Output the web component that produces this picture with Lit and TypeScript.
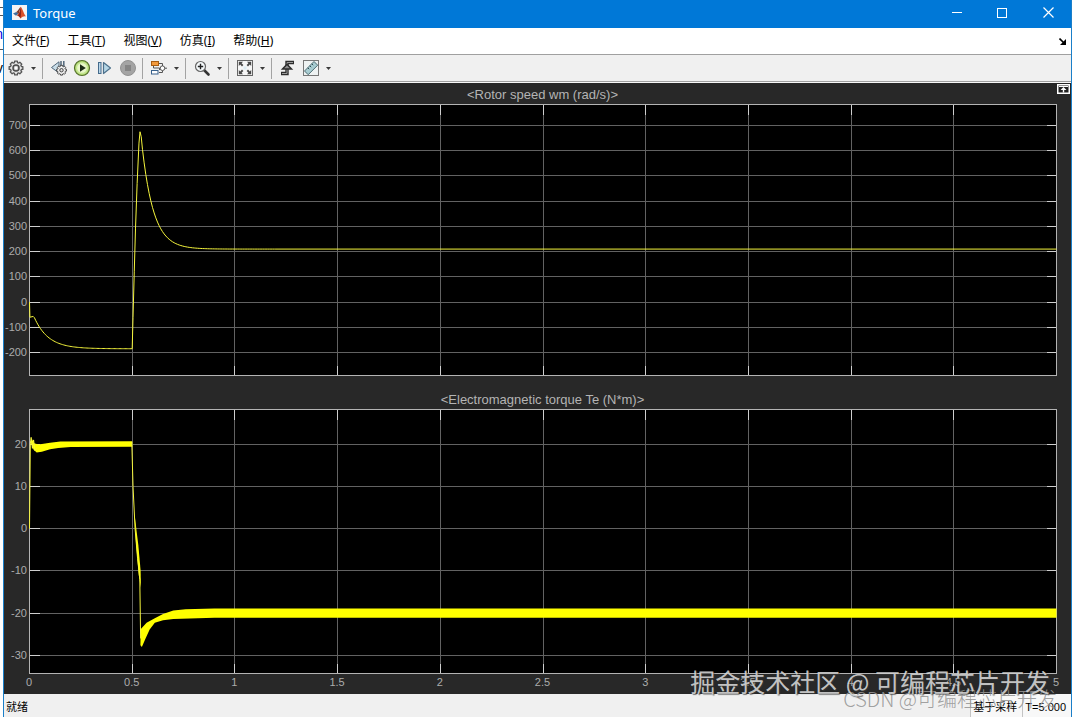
import { LitElement, html, css, svg } from "lit";
import { customElement, property } from "lit/decorators.js";

type Point = [number, number];

/* ---------- icons ---------- */

const icon = (body: unknown, w = 18, h = 18) =>
  html`<svg width=${w} height=${h} viewBox="0 0 ${w} ${h}" aria-hidden="true">${body}</svg>`;

const gearShape = (cx: number, cy: number, r: number) => {
  let d = "";
  const teeth = 8;
  for (let i = 0; i < teeth; i++) {
    const a = (i * 2 * Math.PI) / teeth;
    const at = (o: number, k: number) =>
      `${(cx + Math.cos(a + o) * k).toFixed(2)} ${(cy + Math.sin(a + o) * k).toFixed(2)}`;
    d += `${i ? "L" : "M"}${at(-0.27, r * 0.8)}L${at(-0.2, r)}L${at(0.2, r)}L${at(0.27, r * 0.8)}`;
  }
  return d + "Z";
};

const icons = {
  matlab: icon(
    svg`<rect width="15" height="15" fill="#f4f4f4" />
      <path d="M1 8.6 4.3 7 6.5 8.6 4 10.8Z" fill="#3f6f9f" />
      <path d="M4.3 7C6 6.500 7.200 3 8.700 1.800L6.800 9 4.500 10.800 6.500 8.600Z" fill="#7d3a2a" />
      <path d="M8.700 1.800C10.500 3.500 11.500 8.500 14 11.500 12.300 10.800 10.500 11.500 8.500 13.500 7.500 11.500 6.500 10.600 4.500 10.800 7.500 9 8 5 8.700 1.800Z" fill="#d8502a" />
      <path d="M8.700 1.800C9.200 5 9.300 9 8.500 13.500 7.800 12 7 11 6 10.700 8 8 8.300 5 8.700 1.800Z" fill="#8c2418" />`,
    15,
    15
  ),
  gear: icon(
    svg`<path d=${gearShape(9, 9, 7)} fill="#e6e6e6" stroke="#555" stroke-width="1.300" stroke-linejoin="round" />
      <circle cx="9" cy="9" r="3" fill="#d4d4d4" stroke="#4a4a4a" stroke-width="1.500" />
      <circle cx="9" cy="9" r="1.200" fill="#fff" />`
  ),
  stepBack: icon(
    svg`<path d="M1.500 8.500 9 2.800V14Z" fill="#c9dde8" stroke="#51677a" stroke-linejoin="round" />
      <path d="M11 2V8M13.800 2V8" stroke="#51677a" stroke-width="1.500" />
      <path d=${gearShape(11.5, 11.2, 5)} fill="#eee" stroke="#444" />
      <circle cx="11.500" cy="11.200" r="1.700" fill="#ddd" stroke="#444" />`
  ),
  run: icon(
    svg`<circle cx="9" cy="9" r="7.500" fill="#a9d468" stroke="#55702c" stroke-width="1.200" />
      <circle cx="9" cy="9" r="5.600" fill="#e9f7cb" stroke="#c6e692" stroke-width="1.500" />
      <path d="M7 5.300 12.800 9 7 12.700Z" fill="#1c2b16" />`
  ),
  step: icon(
    svg`<rect x="2.500" y="3.500" width="2.500" height="11" fill="#b9d7ea" stroke="#456b8c" />
      <path d="M7.500 3.500 14.500 9 7.500 14.500Z" fill="#b5d6e6" stroke="#4d718c" stroke-width="1.200" stroke-linejoin="round" />`
  ),
  stop: icon(
    svg`<circle cx="9" cy="9" r="7.500" fill="#a4a4a4" stroke="#929292" />
      <rect x="6" y="6" width="6" height="6" fill="#858585" />`
  ),
  blocks: icon(
    svg`<path d="M9 4.500H12.500V7M9 13.500H12.500V11.500M3.500 6V9H9.500V11" fill="none" stroke="#555" />
      <rect x="1.500" y="2.500" width="7" height="4" fill="#f39a3c" stroke="#a65b12" />
      <rect x="1.500" y="11.500" width="6.500" height="3.500" fill="#fff" stroke="#38618c" />
      <circle cx="12.500" cy="9.200" r="2.300" fill="#fff" stroke="#555" />
      <path d="M14.800 9.200H17" stroke="#555" />`
  ),
  zoomIn: icon(
    svg`<path d="M11 11 15.500 15.500" stroke="#333" stroke-width="2.600" stroke-linecap="round" />
      <circle cx="7.500" cy="7.500" r="5" fill="#f6fafc" stroke="#666" stroke-width="1.200" />
      <path d="M4.800 7.500H10.200M7.500 4.800V10.200" stroke="#222" stroke-width="1.400" />`
  ),
  fit: icon(
    svg`<rect x="1.500" y="1.500" width="15" height="15" fill="#f7f7f7" stroke="#666" />
      <path d="M2.800 2.800H7L5.600 4.200 7.400 6 6 7.400 4.200 5.600 2.800 7ZM15.200 2.800V7L13.800 5.600 12 7.400 10.600 6 12.400 4.200 11 2.800ZM2.800 15.200V11L4.200 12.400 6 10.600 7.400 12 5.600 13.800 7 15.200ZM15.200 15.200H11L12.400 13.800 10.600 12 12 10.600 13.800 12.400 15.200 11Z" fill="#484848" />
      <rect x="7.500" y="7.500" width="3" height="3" fill="#dcebf2" />`
  ),
  trigger: icon(
    svg`<path d="M2 14.500H8V3.500H15" fill="none" stroke="#2c2c2c" stroke-width="3.400" />
      <path d="M3 14.500H8V3.500H14" fill="none" stroke="#9a9a9a" />
      <path d="M3.500 10 8 5.300 12.500 10Z" fill="#8e8e8e" stroke="#2c2c2c" stroke-width="1.500" />`
  ),
  ruler: icon(
    svg`<rect x="1.500" y="1.500" width="15" height="15" fill="#eef2f2" stroke="#777" />
      <path d="M2.500 12 12 2.500 15.700 6.200 6.200 15.700Z" fill="#a8cdd2" stroke="#4c6b72" />
      <path d="M9.800 4.800 11.200 6.200M7.800 6.800 9.200 8.200M5.800 8.800 7.200 10.200" stroke="#2f4b52" />`
  ),
  caret: icon(svg`<path d="M0 0H5L2.500 3Z" fill="#3a3a3a" />`, 5, 3),
  minimize: icon(svg`<path d="M0 5.500H10" stroke="#fff" />`, 10, 11),
  maximize: icon(svg`<rect x=".5" y=".5" width="9" height="9" fill="none" stroke="#fff" />`, 10, 10),
  close: icon(svg`<path d="M.5 .5 10.500 10.500M10.500 .5 .5 10.500" stroke="#fff" stroke-width="1.200" />`, 11, 11),
  dock: icon(svg`<path d="M.5 .5 5 5" stroke="#000" stroke-width="1.600" /><path d="M7 1V7H1Z" fill="#000" />`, 7, 7),
  pin: icon(
    svg`<rect x=".75" y=".75" width="11.500" height="8.500" fill="#222" stroke="#fff" stroke-width="1.500" />
      <path d="M2 2.500H11" stroke="#fff" /><path d="M6.500 3 9.500 6H3.500ZM5.800 5H7.200V8.500H5.800Z" fill="#fff" />`,
    13,
    10
  ),
};

/* ---------- signals ---------- */

const decay = (t0: number, t1: number, from: number, to: number, tau: number): Point[] => {
  const out: Point[] = [];
  const n = 80;
  for (let i = 0; i <= n; i++) {
    const t = t0 + ((t1 - t0) * i) / n;
    out.push([t, to + (from - to) * Math.exp(-(t - t0) / tau)]);
  }
  return out;
};

const speed: Point[] = [
  [0, 0],
  [0.002, -60],
  [0.018, -57],
  ...decay(0.024, 0.5, -62, -185, 0.068),
  [0.504, -60],
  [0.51, 120],
  [0.516, 290],
  [0.524, 470],
  [0.533, 630],
  [0.538, 675],
  [0.544, 655],
  ...decay(0.55, 1.2, 605, 210, 0.056),
  [5, 210],
];

const torqueLine: Point[] = [
  [0, 0],
  [0.004, 20],
  [0.008, 21.6],
  [0.014, 19],
  [0.02, 21],
  [0.026, 18.5],
  [0.036, 19],
];

const torqueFall: Point[] = [
  [0.498, 20.5],
  [0.504, 10],
  [0.514, 0],
  [0.526, -7],
  [0.537, -12],
  [0.541, -26],
];

const torqueStart: Point[] = [
  [0.004, 20.6],
  [0.012, 21.2],
  [0.022, 20.2],
  [0.045, 19.9],
  [0.1, 20.3],
  [0.15, 20.6],
  [0.5, 20.7],
  [0.5, 19.4],
  [0.2, 19.3],
  [0.14, 19.1],
  [0.1, 18.8],
  [0.06, 18.2],
  [0.035, 18.0],
  [0.02, 18.7],
];

const torqueSettled: Point[] = [
  [0.541, -23.8],
  [0.57, -22.3],
  [0.61, -21.2],
  [0.65, -20.2],
  [0.7, -19.4],
  [0.76, -19.1],
  [0.9, -18.9],
  [5, -18.9],
  [5, -21.1],
  [0.9, -21.1],
  [0.7, -21.4],
  [0.65, -21.7],
  [0.61, -22.3],
  [0.585, -23.9],
  [0.565, -26],
  [0.547, -28],
  [0.54, -27.6],
];

const torqueFallBand: Point[] = [
  [0.51, 4],
  [0.53, -4],
  [0.541, -10],
  [0.542, -14],
  [0.532, -11],
  [0.518, -3],
];

/* ---------- plot ---------- */

@customElement("scope-plot")
class ScopePlot extends LitElement {
  @property() heading = "";
  @property({ type: Number }) min = 0;
  @property({ type: Number }) max = 1;
  @property({ type: Boolean }) axis = false;
  @property({ attribute: false }) ticks: number[] = [];
  @property({ attribute: false }) lines: Point[][] = [];
  @property({ attribute: false }) bands: Point[][] = [];

  static styles = css`
    :host {
      display: flex;
      flex-direction: column;
      min-height: 0;
    }
    .heading {
      margin: 0;
      padding: 2px 15px 0 25px;
      font-size: 13px;
      font-weight: 400;
      line-height: 19px;
      text-align: center;
      color: #b4b4b4;
    }
    .area {
      flex: 1;
      min-height: 0;
      padding: 0 15px 0 25px;
      display: grid;
    }
    .plot {
      width: 100%;
      height: 100%;
      min-height: 0;
      overflow: visible;
    }
    .back {
      fill: #000;
    }
    .crisp {
      shape-rendering: crispEdges;
    }
    .grid {
      stroke: #626262;
    }
    .tick {
      stroke: #cfcfcf;
    }
    .frame {
      fill: none;
      stroke: #b4b4b4;
    }
    .label {
      font-size: 11px;
      fill: #acacac;
    }
    .end {
      text-anchor: end;
    }
    .mid {
      text-anchor: middle;
    }
    .line {
      fill: none;
      stroke: #f6f63c;
      stroke-width: 1px;
      vector-effect: non-scaling-stroke;
      stroke-linejoin: round;
    }
    .band {
      fill: #ffff00;
    }
  `;

  render() {
    const y = (v: number) => ((this.max - v) / (this.max - this.min)) * 100;
    const pts = (list: Point[]) => list.map(([t, v]) => `${(t * 20).toFixed(3)},${y(v).toFixed(3)}`).join(" ");
    const xs = Array.from({ length: 11 }, (_, i) => i * 0.5);
    return html`
      <h2 class="heading">${this.heading}</h2>
      <div class="area">
        <svg class="plot" role="img" aria-label=${this.heading}>
          <rect class="back" width="100%" height="100%" />
          <g class="crisp" transform="translate(0.5 0.5)">
            ${xs.slice(1, -1).map((x) => svg`
              <line class="grid" x1="${x * 20}%" x2="${x * 20}%" y1="0" y2="100%" />
              <line class="tick" x1="${x * 20}%" x2="${x * 20}%" y1="0" y2="10" />
              <svg y="100%" overflow="visible"><line class="tick" x1="${x * 20}%" x2="${x * 20}%" y1="-10" y2="0" /></svg>`)}
            ${this.ticks.map((v) => svg`
              <line class="grid" x1="0" x2="100%" y1="${y(v)}%" y2="${y(v)}%" />
              <line class="tick" x1="0" x2="10" y1="${y(v)}%" y2="${y(v)}%" />
              <svg x="100%" overflow="visible"><line class="tick" x1="-10" x2="0" y1="${y(v)}%" y2="${y(v)}%" /></svg>`)}
            <rect class="frame" width="100%" height="100%" />
          </g>
          <g transform="translate(0.5 0.5)">
            <svg width="100%" height="100%" viewBox="0 0 100 100" preserveAspectRatio="none" overflow="visible">
              ${this.bands.map((b) => svg`<polygon class="band" points=${pts(b)} />`)}
              ${this.lines.map((l) => svg`<polyline class="line" points=${pts(l)} />`)}
            </svg>
          </g>
          ${this.ticks.map((v) => svg`<text class="label end" x="-2" y="${y(v)}%" dy="4">${v}</text>`)}
          ${this.axis ? xs.map((x) => svg`<text class="label mid" x="${x * 20}%" y="100%" dy="13">${x}</text>`) : ""}
        </svg>
      </div>
    `;
  }
}

/* ---------- window ---------- */

@customElement("app-root")
class AppRoot extends LitElement {
  static styles = css`
    :host {
      display: flex;
      height: 100vh;
      overflow: hidden;
      font-family: "Liberation Sans", "Noto Sans CJK SC", sans-serif;
      color: #000;
      background: #fff;
    }
    button {
      border: 0;
      padding: 0;
      margin: 0;
      background: none;
      font: inherit;
      color: inherit;
      display: flex;
      align-items: center;
      justify-content: center;
    }
    svg {
      display: block;
    }
    .behind {
      width: 3px;
      flex: none;
      display: flex;
      flex-direction: column;
      overflow: hidden;
      font-size: 14px;
      line-height: 16px;
    }
    .rule {
      border-top: 1px solid #555;
      margin-top: 7px;
    }
    .sliver {
      display: flex;
      justify-content: flex-end;
      margin-top: 10px;
    }
    .sliver.blue {
      color: #0000e0;
    }
    .window {
      flex: 1;
      min-width: 0;
      display: flex;
      flex-direction: column;
      position: relative;
      border-left: 1px solid #1a7fc9;
      border-right: 1px solid #1a7fc9;
    }
    .titlebar {
      box-sizing: border-box;
      height: 28px;
      flex: none;
      display: flex;
      align-items: center;
      background: #0078d7;
      color: #fff;
      padding: 0 0 3px 8px;
      gap: 6px;
    }
    .title {
      flex: 1;
      margin: 0;
      font: 400 13px/20px "Noto Sans", sans-serif;
    }
    .controls {
      display: flex;
      align-self: stretch;
    }
    .controls button {
      width: 46px;
    }
    .controls button:first-child {
      width: 45px;
    }
    .menu {
      height: 26px;
      flex: none;
      display: flex;
      align-items: center;
      padding: 0 5px 0 0;
      border-bottom: 1px solid #a0a0a0;
      background: #fff;
      font: 12px/20px "Noto Sans", "Noto Sans CJK SC", sans-serif;
    }
    .menu button {
      padding: 0 10px 0 8px;
    }
    .menu .dock {
      margin-left: auto;
      padding: 0;
    }
    .toolbar {
      height: 26px;
      flex: none;
      display: flex;
      align-items: center;
      background: #f0f0f0;
      border-bottom: 1px solid #a0a0a0;
      box-shadow: 0 1px 0 #f8f8f8;
      margin-bottom: 1px;
    }
    .tool {
      width: 23px;
      height: 26px;
      padding-bottom: 1px;
    }
    .drop {
      width: 12px;
      height: 24px;
    }
    .sep {
      width: 1px;
      height: 21px;
      margin: 0 4px 0 3px;
      background: #a3a3a3;
    }
    .scope {
      flex: 1;
      min-height: 0;
      display: flex;
      flex-direction: column;
      gap: 13px;
      background: #282828;
      padding: 0 0 21px;
      position: relative;
    }
    .speed {
      flex: 292 1 0;
    }
    .torque {
      flex: 285 1 0;
    }
    .pin {
      position: absolute;
      top: 1px;
      right: 1px;
    }
    .status {
      height: 23px;
      flex: none;
      display: flex;
      align-items: stretch;
      background: #f0f0f0;
      font-size: 11px;
      line-height: 26px;
      padding-left: 2px;
    }
    .ready {
      flex: 1;
    }
    .cell {
      background: #f8f8f8;
      border-left: 1px solid #c4c4c4;
      padding: 2px 5px 0 2px;
      line-height: 22px;
    }
    .mark {
      position: absolute;
      white-space: nowrap;
      pointer-events: none;
      font-family: "Noto Sans CJK SC", sans-serif;
    }
    .mark.large {
      right: 21px;
      bottom: 20px;
      font-size: 25px;
      line-height: 32px;
      color: rgba(215, 215, 215, 0.9);
      text-shadow: 1px 1px 1px rgba(60, 60, 60, 0.7);
    }
    .mark.small {
      right: 14px;
      bottom: 6px;
      font-size: 20px;
      font-weight: 300;
      line-height: 24px;
      color: rgba(150, 150, 150, 0.9);
    }
  `;

  private menuItem(text: string, key: string) {
    return html`<button>${text}(<u>${key}</u>)</button>`;
  }

  private tool(glyph: unknown, label: string, drop = false) {
    return html`<button class="tool" aria-label=${label}>${glyph}</button>${drop
        ? html`<button class="drop" aria-label="${label} ▾">${icons.caret}</button>`
        : ""}`;
  }

  render() {
    const sep = html`<span class="sep"></span>`;
    return html`
      <div class="behind" aria-hidden="true">
        <span class="rule"></span>
        <span class="rule"></span>
        <span class="sliver blue">n</span>
        <span class="rule"></span>
        <span class="sliver">v</span>
      </div>
      <main class="window">
        <header class="titlebar">
          ${icons.matlab}
          <h1 class="title">Torque</h1>
          <div class="controls">
            <button aria-label="最小化">${icons.minimize}</button>
            <button aria-label="最大化">${icons.maximize}</button>
            <button aria-label="关闭">${icons.close}</button>
          </div>
        </header>
        <nav class="menu">
          ${this.menuItem("文件", "F")} ${this.menuItem("工具", "T")} ${this.menuItem("视图", "V")}
          ${this.menuItem("仿真", "I")} ${this.menuItem("帮助", "H")}
          <button class="dock" aria-label="停靠">${icons.dock}</button>
        </nav>
        <div class="toolbar" role="toolbar">
          ${this.tool(icons.gear, "配置", true)} ${sep} ${this.tool(icons.stepBack, "步退")}
          ${this.tool(icons.run, "运行")} ${this.tool(icons.step, "步进")} ${this.tool(icons.stop, "停止")} ${sep}
          ${this.tool(icons.blocks, "模块", true)} ${sep} ${this.tool(icons.zoomIn, "放大", true)} ${sep}
          ${this.tool(icons.fit, "缩放", true)} ${sep} ${this.tool(icons.trigger, "触发器")}
          ${this.tool(icons.ruler, "测量", true)}
        </div>
        <section class="scope">
          <scope-plot
            class="speed"
            heading="<Rotor speed wm (rad/s)>"
            min="-291"
            max="783"
            .ticks=${[700, 600, 500, 400, 300, 200, 100, 0, -100, -200]}
            .lines=${[speed]}
          ></scope-plot>
          <scope-plot
            class="torque"
            heading="<Electromagnetic torque Te (N*m)>"
            min="-34.3"
            max="28.2"
            axis
            .ticks=${[20, 10, 0, -10, -20, -30]}
            .lines=${[torqueLine, torqueFall]}
            .bands=${[torqueStart, torqueFallBand, torqueSettled]}
          ></scope-plot>
          <button class="pin" aria-label="收起工具栏">${icons.pin}</button>
        </section>
        <footer class="status">
          <span class="ready">就绪</span>
          <span class="cell">基于采样</span>
          <span class="cell">T=5.000</span>
        </footer>
        <div class="mark small">CSDN @可编程芯片开发</div>
        <div class="mark large">掘金技术社区 @ 可编程芯片开发</div>
      </main>
    `;
  }
}
